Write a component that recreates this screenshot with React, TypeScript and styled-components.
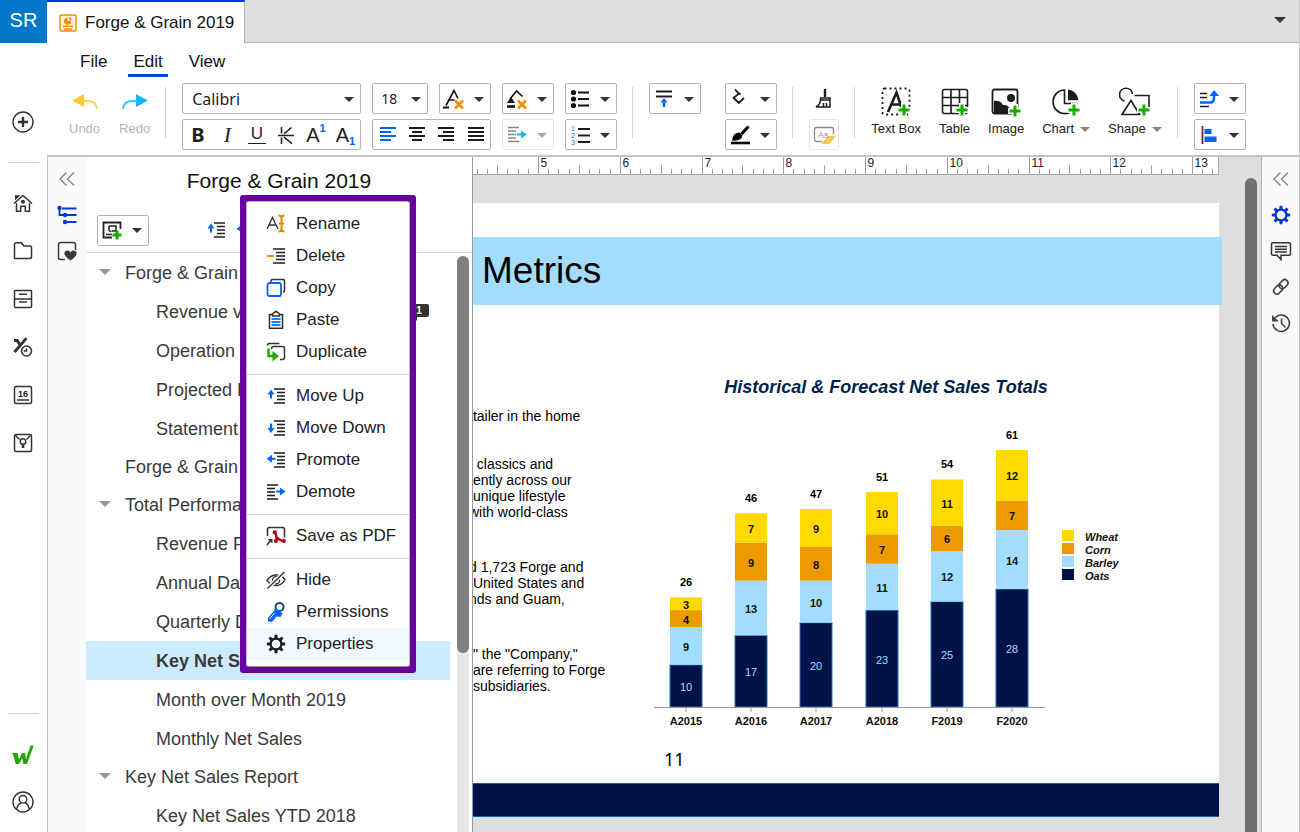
import React from 'react';
import styled, { createGlobalStyle } from 'styled-components';

const BLUE = '#0066ff';
const INK = '#1c1c1c';
const GREEN = '#1fa800';
const ORANGE = '#f29100';
const NAVY = '#001147';

const GlobalStyle = createGlobalStyle`
  *, *::before, *::after { box-sizing: border-box; }
  body {
    margin: 0;
    font-family: "Liberation Sans", Arial, sans-serif;
    color: #222;
    background: #fff;
  }
  button, select, input { font-family: inherit; color: inherit; }
  button { cursor: pointer; }
  ul { list-style: none; margin: 0; padding: 0; }
`;

/* ---------- shell ---------- */

const Shell = styled.div`
  display: flex;
  height: 100vh;
  overflow: hidden;
  border-right: 1px solid #c4c4c4;
`;

const AppNav = styled.nav`
  flex: none;
  width: 47px;
  display: flex;
  flex-direction: column;
  align-items: center;
  padding-bottom: 19px;
`;

const Brand = styled.a`
  align-self: stretch;
  height: 43px;
  flex: none;
  display: flex;
  align-items: center;
  justify-content: center;
  padding-bottom: 3px;
  background: #0077c8;
  color: #fff;
  font-size: 20px;
  line-height: 24px;
  text-decoration: none;
`;

const NavGroup = styled.div<{ $top: number }>`
  display: flex;
  flex-direction: column;
  align-items: center;
  gap: 28px;
  padding: ${(p) => p.$top}px 1px 0 0;
  margin-right: 1px;
`;

const NavFooter = styled(NavGroup)`
  gap: 26px;
`;

const NavRule = styled.hr<{ $top?: number }>`
  width: 31px;
  height: 1px;
  flex: none;
  border: 0;
  margin: ${(p) => p.$top ?? 0}px 0 0;
  background: #d0d0d0;
`;

const Spacer = styled.div`
  flex: 1;
`;

const IconButton = styled.button`
  display: flex;
  align-items: center;
  justify-content: center;
  padding: 0;
  border: 0;
  background: none;
`;

const Main = styled.div`
  flex: 1;
  min-width: 0;
  display: flex;
  flex-direction: column;
`;

/* ---------- header ---------- */

const TabBar = styled.header`
  display: flex;
  flex: none;
  height: 43px;
`;

const DocTab = styled.button`
  display: flex;
  align-items: center;
  gap: 8px;
  width: 198px;
  padding: 0 0 0 12px;
  border: 0;
  border-top: 2px solid #0037d6;
  border-right: 1px solid #b0b0b0;
  background: #fff;
  color: #111;
  font-size: 17px;
  line-height: 20px;
  white-space: nowrap;
`;

const TabRest = styled.div`
  flex: 1;
  display: flex;
  align-items: center;
  justify-content: flex-end;
  padding-right: 13px;
  background: #dedede;
  border-bottom: 1px solid #b0b0b0;
`;

const MenuBar = styled.nav`
  display: flex;
  flex: none;
  gap: 16px;
  height: 34px;
  padding: 5px 0 0 28px;
`;

const MenuLink = styled.a<{ $active?: boolean }>`
  padding: 4px 5px 0;
  font-size: 17px;
  line-height: 20px;
  color: #111;
  text-decoration: none;
  border-bottom: 3px solid ${(p) => (p.$active ? '#0044e0' : 'transparent')};
`;

const Toolbar = styled.div`
  display: flex;
  flex: none;
  height: 80px;
  padding: 6px 0 0 22px;
  border-bottom: 2px solid #c4c4c4;
`;

const Divider = styled.div`
  flex: none;
  width: 1px;
  height: 51px;
  margin: 4px 16px 0 15px;
  background: #d2d2d2;
`;

const Cluster = styled.div<{ $gap: number }>`
  display: flex;
  align-items: flex-start;
  gap: ${(p) => p.$gap}px;
`;

const Stack = styled.div`
  display: flex;
  flex-direction: column;
  gap: 5px;
`;

const Line = styled.div`
  display: flex;
  gap: 11px;
`;

const BigTool = styled.button<{ $muted?: boolean }>`
  display: grid;
  grid-template-rows: 38px 16px;
  justify-items: center;
  align-items: center;
  min-width: 31px;
  padding: 0;
  border: 0;
  background: none;
  font-size: 13px;
  line-height: 16px;
  color: ${(p) => (p.$muted ? '#b4b4b4' : '#222')};
  white-space: nowrap;
`;

const ToolLabel = styled.span`
  display: flex;
  align-items: center;
  gap: 6px;
`;

const Group = styled.div<{ $width: number; $faint?: boolean }>`
  display: flex;
  width: ${(p) => p.$width}px;
  height: 31px;
  border: 1px solid ${(p) => (p.$faint ? '#e6e6e6' : '#b4b4b4')};
  border-radius: 2px;
  background: #fff;

  & > * + * {
    border-left: 1px solid ${(p) => (p.$faint ? '#e6e6e6' : '#c0c0c0')};
  }
`;

const Cell = styled.button`
  flex: 1;
  min-width: 0;
  display: flex;
  align-items: center;
  justify-content: center;
  padding: 0;
  border: 0;
  background: none;
  font-size: 20px;
  line-height: 24px;
`;

const PlainTool = styled(IconButton)`
  width: 30px;
  height: 31px;
`;

const CaretCell = styled.button`
  flex: none;
  width: 22px;
  display: flex;
  align-items: center;
  justify-content: center;
  padding: 0;
  border: 0;
  background: none;
`;

const SizeInput = styled.input`
  flex: 1;
  min-width: 0;
  padding: 0;
  border: 0;
  outline: 0;
  background: none;
  text-align: center;
  font-family: "Noto Sans", sans-serif;
  font-size: 14px;
`;

const FontField = styled.label`
  position: relative;
  display: block;
  width: 179px;
  height: 31px;
`;

const FontSelect = styled.select`
  appearance: none;
  width: 100%;
  height: 100%;
  padding: 0 24px 0 9px;
  border: 1px solid #b4b4b4;
  border-radius: 2px;
  background: #fff;
  font-family: "Noto Sans", sans-serif;
  font-size: 16px;
`;

const FieldCaret = styled.span`
  position: absolute;
  top: 10px;
  right: 7px;
  display: flex;
  pointer-events: none;
`;

const Bold = styled.b`
  font-family: "Noto Sans", sans-serif;
`;

const Italic = styled.i`
  font-family: "Liberation Serif", serif;
  font-size: 22px;
`;

const Underlined = styled.span`
  font-size: 17px;
  line-height: 18px;
  padding: 0 3px;
  border-bottom: 1px solid #222;
`;

const Script = styled.span<{ $low?: boolean }>`
  align-self: ${(p) => (p.$low ? 'flex-end' : 'flex-start')};
  font-size: 11px;
  line-height: 16px;
  font-weight: bold;
  color: ${BLUE};
`;

/* ---------- workspace ---------- */

const Workspace = styled.div`
  flex: 1;
  min-height: 0;
  display: flex;
`;

const Strip = styled.div<{ $side: 'left' | 'right' }>`
  flex: none;
  width: ${(p) => (p.$side === 'left' ? 39 : 38)}px;
  display: flex;
  flex-direction: column;
  align-items: center;
  gap: 16px;
  padding-top: 12px;
  background: #fafafa;
  border-left: 1px solid ${(p) => (p.$side === 'left' ? '#c4c4c4' : '#b4b4b4')};
`;

const Outline = styled.aside`
  position: relative;
  flex: none;
  width: 387px;
  display: flex;
  flex-direction: column;
  border-right: 1px solid #999;
`;

const OutlineTitle = styled.h1`
  margin: 0;
  padding: 12px 0 22px;
  text-align: center;
  font-size: 21px;
  line-height: 24px;
  font-weight: normal;
  color: #111;
`;

const OutlineTools = styled.div`
  display: flex;
  flex: none;
  align-items: center;
  height: 38px;
  padding: 0 11px 7px;
  border-bottom: 1px solid #dcdcdc;
`;

const OutlineMoves = styled.div`
  display: flex;
  gap: 10px;
  padding-left: 57px;
`;

const TreeArea = styled.div`
  flex: 1;
  min-height: 0;
  display: flex;
  overflow: hidden;
`;

const Tree = styled.ul`
  flex: 1;
  min-width: 0;
  && { padding-top: 1px; }
`;

const TreeRow = styled.li<{ $branch?: boolean; $selected?: boolean }>`
  display: flex;
  align-items: center;
  height: ${(p) => (p.$branch ? 38 : 39)}px;
  padding: 0 21px 0 ${(p) => (p.$branch ? 13 : 70)}px;
  background: ${(p) => (p.$selected ? '#cdebff' : 'transparent')};
  font-size: 18px;
  line-height: 22px;
  font-weight: ${(p) => (p.$selected ? 'bold' : 'normal')};
  color: #3a3a3a;
  white-space: nowrap;
`;

const Twisty = styled.span`
  display: flex;
  width: 26px;
`;

const TreeText = styled.span`
  flex: 1;
`;

const ScrollTrack = styled.div`
  flex: none;
  width: 12px;
  margin: 3px 3px 0 7px;
  border-radius: 6px 6px 0 0;
  background: #e8e8e8;
`;

const ScrollThumb = styled.div<{ $height: string; $color: string }>`
  height: ${(p) => p.$height};
  border-radius: 6px;
  background: ${(p) => p.$color};
`;

/* ---------- context menu ---------- */

const MenuFrame = styled.div`
  position: absolute;
  z-index: 5;
  top: 38px;
  left: 154px;
  width: 176px;
  padding: 6px;
  border-radius: 3px;
  background: #6a00a0;
`;

const ContextMenu = styled.div`
  padding: 6px 0;
  border: 1px solid #bbb;
  border-bottom-color: #999;
  border-radius: 3px;
  background: #fff;
`;

const MenuItem = styled.button<{ $hover?: boolean }>`
  display: flex;
  align-items: center;
  gap: 10px;
  width: 100%;
  height: 32px;
  padding: 0 0 0 19px;
  border: 0;
  background: ${(p) => (p.$hover ? '#f1f8ff' : 'none')};
  font-size: 17px;
  line-height: 20px;
  color: #222;
  white-space: nowrap;
`;

const MenuRule = styled.hr`
  height: 1px;
  margin: 6px 0 5px;
  border: 0;
  background: #d8d8d8;
`;

/* ---------- slide ---------- */

const Canvas = styled.main`
  flex: 1;
  min-width: 0;
  display: flex;
  background: #dedede;
`;

const Page = styled.div`
  flex: 1;
  min-width: 0;
  display: flex;
  flex-direction: column;
`;

const RulerBar = styled.div`
  height: 18px;
  flex: none;
  overflow: hidden;
  background: #fff;
  border-right: 1px solid #aaa;
  border-bottom: 1px solid #a8a8a8;
`;

const Slide = styled.section`
  margin-top: 28px;
  padding-top: 34px;
  background: #fff;
`;

const SlideTitle = styled.h2`
  margin: 0 -3px 0 0;
  padding: 0 9px;
  height: 68px;
  background: #a2ddff;
  color: #000;
  font-size: 37px;
  line-height: 68px;
  font-weight: normal;
`;

const SlideBody = styled.div`
  display: flex;
  height: 436px;
`;

const Copy = styled.div`
  flex: none;
  width: 177px;
  padding-top: 103px;
  overflow: hidden;
`;

const Para = styled.p<{ $gap: number }>`
  margin: 0 0 ${(p) => p.$gap}px -4px;
  font-size: 14px;
  line-height: 16px;
  color: #000;
  white-space: pre;
`;

const ChartBox = styled.div`
  padding-top: 65px;
`;

const PageNumber = styled.div`
  height: 42px;
  padding: 6px 0 0 191px;
  font-family: "Noto Sans", sans-serif;
  font-size: 18px;
  line-height: 24px;
  color: #000;
`;

const SlideFooter = styled.footer`
  height: 34px;
  background: ${NAVY};
  border-top: 1px solid #1060a8;
  border-bottom: 1px solid #1060a8;
`;

const CanvasScroll = styled.div`
  flex: none;
  width: 42px;
  padding: 21px 4px 0 26px;
`;

/* ---------- icons ---------- */

type SvgProps = { w?: number; h?: number; sw?: number; color?: string; children: React.ReactNode };
const Svg = ({ w = 20, h = 20, sw = 1.5, color = '#333', children }: SvgProps) => (
  <svg width={w} height={h} viewBox={`0 0 ${w} ${h}`} fill="none" stroke={color} strokeWidth={sw} aria-hidden="true">
    {children}
  </svg>
);

const Caret = ({ color = '#333' }: { color?: string }) => (
  <Svg w={10} h={12}><path d="M0 4h10l-5 5z" fill={color} stroke="none" /></Svg>
);

const Plus = ({ x, y }: { x: number; y: number }) => (
  <g>
    <path d={`M${x - 7} ${y}h14M${x} ${y - 7}v14`} stroke="#fff" strokeWidth="6" />
    <path d={`M${x - 5.5} ${y}h11M${x} ${y - 5.5}v11`} stroke={GREEN} strokeWidth="3" />
  </g>
);

const Gear = ({ color }: { color: string }) => (
  <Svg color={color}>
    <circle cx="10" cy="10" r="5.400" strokeWidth="2.200" />
    {[0, 45, 90, 135, 180, 225, 270, 315].map((a) => (
      <path key={a} d="M8.2 4.6 8.7 0.8h2.6l.5 3.8z" fill={color} stroke="none" transform={`rotate(${a} 10 10)`} />
    ))}
  </Svg>
);

const Collapse = () => (
  <Svg color="#8a8a8a"><path d="M9.5 3.5 3 10l6.500 6.500M17 3.500 10.500 10l6.500 6.500" /></Svg>
);

const listLines = (x: number) => `M${x} 3h${19 - x}M${x + 3} 6.500h${16 - x}M${x + 3} 10h${16 - x}M${x + 3} 13.500h${16 - x}M${x} 17h${19 - x}`;

const icons = {
  plusCircle: (
    <Svg w={22} h={22} sw={1.4}><circle cx="11" cy="11" r="10" /><path d="M6 11h10M11 6v10" strokeWidth="2.400" /></Svg>
  ),
  home: (
    <Svg>
      <path d="M1 10.500 10 2.500l9 8" />
      <path d="M3.500 10v8.200h4.200v-5h4.600v5h4.200V10" />
      <path d="M2 2.200h5.500L2 7.500z" fill="#333" stroke="none" />
      <circle cx="10" cy="8.800" r="2" fill="#333" stroke="none" />
    </Svg>
  ),
  folder: <Svg><path d="M1.500 17.500v-14q0-1.800 1.800-1.800h5l2.500 3.300h5.900q1.800 0 1.800 1.800v9q0 1.700-1.800 1.700z" /></Svg>,
  cabinet: <Svg><rect x="1.500" y="1.500" width="17" height="17" rx="1" /><path d="M1.500 10h17M6 5.300h8M6 13h8" /></Svg>,
  formula: (
    <Svg>
      <path d="M1 3.500h3.200l5 8M1.500 15 13.500 1.200" strokeWidth="2.800" />
      <circle cx="13.500" cy="14" r="7" fill="#fff" stroke="none" />
      <circle cx="13.500" cy="14" r="5" />
      <path d="M13.500 11.500V14h-2.800" />
    </Svg>
  ),
  calendar: (
    <Svg>
      <rect x="1.500" y="1.500" width="17" height="17" rx="1.500" />
      <text x="10" y="12" fontSize="9" fontWeight="bold" textAnchor="middle" fill="#222" stroke="none">16</text>
      <path d="M4 15h12" />
    </Svg>
  ),
  idea: (
    <Svg>
      <rect x="1.500" y="1.500" width="17" height="17" rx="1.500" />
      <path d="m2.500 2.500 4 4M17.500 2.500l-4 4" />
      <circle cx="10" cy="8.500" r="2.800" />
      <path d="M9.300 11.300v3h1.400v-3" strokeWidth="1.300" />
    </Svg>
  ),
  logo: (
    <Svg w={22} color={GREEN} sw={3.4}>
      <path d="M0 8h5.500L7 14.500 10 8h3l1 6.500L18.500 0.500h3.200L15 19h-3.600l-1.200-6L7 19H3.600L1.600 11z" fill={GREEN} stroke="none" />
    </Svg>
  ),
  user: (
    <Svg w={22} h={22} sw={1.4}>
      <circle cx="11" cy="11" r="10" /><circle cx="11" cy="8.300" r="3.800" /><path d="M4.800 18q1-5.300 4.300-6M17.200 18q-1-5.300-4.300-6" />
    </Svg>
  ),
  doc: (
    <Svg w={18} h={18} color="#f28c00">
      <rect x="1" y="1" width="16" height="16" rx="1.500" fill="#fff5e4" />
      <path d="M8.500 3.500v3.200h3.700a3.600 3.600 0 1 1-3.700-3.200z" fill="#f28c00" stroke="none" />
      <path d="M10 2.800a3.400 3.400 0 0 1 2.900 2.900h-2.900z" fill="#f28c00" stroke="none" />
      <path d="M4 12.300h10M5 15h8" strokeWidth="1.400" />
    </Svg>
  ),
  undo: (
    <Svg w={26} h={16} color="#ffd24d" sw={2}>
      <path d="M0 6.500 12 0v13z" fill="#ffc83d" stroke="none" /><path d="M11 7h5q8 0 9 8" />
    </Svg>
  ),
  redo: (
    <Svg w={26} h={16} color="#3cc4ff" sw={2}>
      <path d="M26 6.500 14 0v13z" fill="#12b4ff" stroke="none" /><path d="M15 7h-5q-8 0-9 8" />
    </Svg>
  ),
  strike: (
    <Svg color="#222" sw={1.6}>
      <path d="M2 10.500h16M5.500 2v6.500M5.500 12.500V19M15.500 2.500 8 8.800M8 12.200l8 6.500" />
    </Svg>
  ),
  alignLeft: <Svg color={BLUE} sw={2}><path d="M2 3h16M2 7h11M2 11h16M2 15h11" /></Svg>,
  alignCenter: <Svg color={INK} sw={2}><path d="M2 3h16M5 7h10M2 11h16M5 15h10" /></Svg>,
  alignRight: <Svg color={INK} sw={2}><path d="M2 3h16M7 7h11M2 11h16M7 15h11" /></Svg>,
  justify: <Svg color={INK} sw={2}><path d="M2 3h16M2 7h16M2 11h16M2 15h16" /></Svg>,
  clearColor: (
    <Svg w={24} h={22} color="#111">
      <path d="M4 17.500 12 2.500l4 8" strokeWidth="1.600" /><path d="M6.500 12h6" />
      <path d="M1 19.500h6" strokeWidth="2" />
      <path d="m13 12.500 8 8M21 12.500l-8 8" stroke={ORANGE} strokeWidth="2.800" />
    </Svg>
  ),
  clearFill: (
    <Svg w={24} h={22} color="#111">
      <path d="m5 11 6.500-8 6 5.500" strokeWidth="1.600" /><path d="m6 9 4 6H2z" fill="#111" stroke="none" />
      <path d="M2 18.500h8" strokeWidth="2.600" />
      <path d="m13 12.500 8 8M21 12.500l-8 8" stroke={ORANGE} strokeWidth="2.800" />
    </Svg>
  ),
  bullets: (
    <Svg color="#111" sw={2}>
      <path d="M8 3.500h11M8 10h11M8 16.500h11" />
      {[3.5, 10, 16.5].map((y) => <circle key={y} cx="3.500" cy={y} r="2.600" fill="#111" stroke="none" />)}
    </Svg>
  ),
  numbers: (
    <Svg color={INK} sw={1.8}>
      <path d="M8 4h12M8 10.500h12M8 17h12" />
      <g fill="#2277aa" stroke="none" fontSize="7"><text x="1" y="6">1</text><text x="1" y="13">2</text><text x="1" y="20">3</text></g>
    </Svg>
  ),
  indent: (
    <Svg color="#888" sw={1.3}>
      <path d="M1 2.500h11M1 6h8M1 9.500h8M1 13h8M1 16.500h11" /><path d="M10 9.500h5" stroke="#19b5ff" strokeWidth="2" /><path d="m14 5.500 6 4-6 4z" fill="#19b5ff" stroke="none" />
    </Svg>
  ),
  alignTop: (
    <Svg color={INK} sw={1.8}><path d="M2 2.500h16M2 7.500h16" /><path d="M10 18v-6" stroke={BLUE} strokeWidth="2.400" /><path d="m6.500 13.500 3.500-4.500 3.500 4.500z" fill={BLUE} stroke="none" /></Svg>
  ),
  bucket: <Svg color={INK} sw={1.8}><path d="M5 0.500 9 4.500 3.500 9l6 5.500M9.500 4.500l1 1M8.500 14 14 9" /></Svg>,
  highlight: (
    <Svg color="#000"><path d="M1 18h19" strokeWidth="2.600" /><path d="m11.500 9 7-7.500" strokeWidth="3.200" /><path d="M2 15.500q1-8 7.500-8l3 3q-1 6-10.500 5z" fill="#000" stroke="none" /></Svg>
  ),
  brush: (
    <Svg color={INK}><path d="M11 0v8" strokeWidth="2.400" /><path d="M6.500 11V9h9.500v9H2q4-2 4.500-7h9M9.500 14v4M12.500 14v4" /></Svg>
  ),
  clearStyle: (
    <Svg w={22} h={20} color="#8c8c8c" sw={1.3}>
      <path d="M9 16.500H3.500q-2 0-2-2v-10q0-2 2-2h15q2 0 2 2V9" />
      <text x="5" y="12.500" fontSize="9" fill="#8c8c8c" stroke="none">As</text>
      <path d="m10 18 6-6h5l-5 6z" fill="#ffd24d" stroke="#f8b932" />
    </Svg>
  ),
  textBox: (
    <Svg w={30} h={30} color={INK}>
      <rect x="1.500" y="1.500" width="27" height="26" rx="2" strokeWidth="1.800" strokeDasharray="2 3" />
      <path d="M7 25 15.500 5.500 21 22M10.500 17.500h8" strokeWidth="2.600" /><Plus x={23} y={23} />
    </Svg>
  ),
  table: (
    <Svg w={28} h={30} color={INK} sw={1.6}>
      <rect x="1.500" y="2.500" width="25" height="24" rx="2" /><path d="M1.500 10.500h25M1.500 18.500h25M10 2.500v24M18.500 2.500v24" /><Plus x={21} y={23} />
    </Svg>
  ),
  image: (
    <Svg w={30} h={30} color={INK} sw={1.8}>
      <rect x="1.500" y="2.500" width="25" height="24" rx="2" />
      <circle cx="20" cy="11" r="4" fill={INK} stroke="none" />
      <path d="M3 26V14q6-1 9 4 7-1 8 8z" fill={INK} stroke="none" /><Plus x={24} y={24} />
    </Svg>
  ),
  chart: (
    <Svg w={30} h={30} color={INK} sw={1.6}>
      <path d="M13.500 3a11.800 11.800 0 1 0 12 13.500H13.500z" /><path d="M17 2.500a11.500 11.500 0 0 1 10.500 10.800H17z" fill={INK} stroke="none" /><Plus x={23} y={23} />
    </Svg>
  ),
  shape: (
    <Svg w={32} h={30} color={INK} sw={1.6}>
      <path d="M5.500 14a6.500 6.500 0 1 1 8-7M15.500 8.500h14.500v12.500h-8" /><path d="M12 13.500 20.500 27.500H3z" /><Plus x={25} y={23} />
    </Svg>
  ),
  order: (
    <Svg color={INK} sw={1.6}><path d="M1 4.500h7M1 8.500h7M1 17.500h9" /><path d="M1 13.500h10q4 0 4-5V6" stroke={BLUE} strokeWidth="2.600" /><path d="m10.500 7 4.500-6 5 6z" fill={BLUE} stroke="none" /></Svg>
  ),
  arrange: (
    <Svg color="#7a2030" sw={1.8}><path d="M3.500 1v18" /><rect x="5.500" y="4" width="7" height="5" fill={BLUE} stroke="none" /><rect x="5.500" y="11.500" width="12" height="5.500" fill={BLUE} stroke="none" /></Svg>
  ),
  outline: (
    <Svg color="#0037d6" sw={1.8}>
      <path d="M5 3.500h14.500M2.500 3.500V10H19.500M10 17h9.500" />
      {[[2.5, 3], [8, 10], [8, 17]].map(([x, y]) => <circle key={y} cx={x} cy={y} r="2.200" fill="#0037d6" stroke="none" />)}
    </Svg>
  ),
  favorite: (
    <Svg color="#3a3a3a">
      <path d="M8 18.500H3.500q-2 0-2-2v-13q0-2 2-2h13q2 0 2 2V9" />
      <path d="M13.500 19.500C8 15.500 7 13.500 7.500 11.500c.8-2.300 4.500-3 6 0 1.500-3 5.200-2.300 6 0 .5 2-.5 4-6 8z" fill="#3a3a3a" stroke="none" />
    </Svg>
  ),
  addSection: (
    <Svg color="#222">
      <path d="M10 17.500H1.500v-15h17V9" strokeWidth="1.800" /><path d="M7 6h7v5H9.500M7 6v3.500q0 2 2 2M4 14.500h6" />
      <path d="M10.500 15h9M15 10.500v9" stroke={GREEN} strokeWidth="3" />
    </Svg>
  ),
  comment: <Svg w={22}><path d="M3 1.800h16q1.500 0 1.500 1.500v9.400q0 1.500-1.500 1.500h-8v4.300l-4-4.300H3q-1.500 0-1.500-1.500V3.300q0-1.500 1.500-1.500z" /><path d="M5 5.500h12M5 8.200h12M5 11h12" /></Svg>,
  link: (
    <Svg color="#444" sw={1.6}>
      <g transform="rotate(-45 10 10)"><rect x="1.200" y="6.500" width="10" height="6.500" rx="3.200" /><rect x="8.800" y="6.500" width="10" height="6.500" rx="3.200" /></g>
    </Svg>
  ),
  history: (
    <Svg color="#444" sw={1.6}><path d="M4 4.800A8.200 8.200 0 1 1 2 11" /><path d="M10.500 5.500v5l4 4" /><path d="M1 2v6.500h7z" fill="#444" stroke="none" /></Svg>
  ),
  badge: (
    <Svg w={18} h={18}>
      <path d="M2 1h14q2 0 2 2v9q0 2-2 2H6v4l-3-4H2z" fill="#333" stroke="none" />
      <text x="8" y="11" fontSize="10" fontWeight="bold" textAnchor="middle" fill="#fff" stroke="none">1</text>
    </Svg>
  ),
  rename: (
    <Svg sw={1.4}><path d="M1 15 6.500 3.500 12 15M3 11h7" /><path d="M12.500 1.500q3 0 3 2.500v11q0 2.500-3 2.500M18.500 1.500q-3 0-3 2.500v11q0 2.500 3 2.500M13 9.500h5" stroke="#e08a00" strokeWidth="2" /></Svg>
  ),
  remove: <Svg color={INK} sw={1.6}><path d={listLines(7)} /><path d="M1 10h7" stroke={ORANGE} strokeWidth="2" /></Svg>,
  copy: (
    <Svg sw={1.5}><path d="M5 4V3q0-1.500 1.500-1.500h10.500q1.500 0 1.500 1.500v9.500q0 1.500-1.500 1.500" /><rect x="1.500" y="5" width="13.500" height="13" rx="2" fill="#fff" stroke={BLUE} strokeWidth="1.800" /></Svg>
  ),
  paste: (
    <Svg sw={1.6}><path d="M7 4.500H3.500v13.700h13V4.500H13M6.500 6V3.800L10 1.300l3.500 2.500V6z" /><path d="M5.500 9h9M5.500 12h9M5.500 15h9" stroke="#0a84ff" strokeWidth="1.800" /></Svg>
  ),
  duplicate: (
    <Svg sw={1.5}>
      <path d="M1.500 3.500q0-2 2-2h10M5.500 7V6.500q0-2 2-2h9q2 0 2 2v9q0 2-2 2H14" />
      <path d="M2.500 6.500v7.500h5" stroke={GREEN} strokeWidth="2.400" /><path d="m6.500 9 6.500 5-6.500 5.500z" fill={GREEN} stroke="none" />
    </Svg>
  ),
  moveUp: <Svg color={INK} sw={1.6}><path d={listLines(8)} /><path d="M5 12.500V6.500" stroke={BLUE} strokeWidth="2" /><path d="m1.500 8.500 3.500-5 3.500 5z" fill={BLUE} stroke="none" /></Svg>,
  moveDown: <Svg color={INK} sw={1.6}><path d={listLines(8)} /><path d="M5 5.500v6" stroke={BLUE} strokeWidth="2" /><path d="m1.500 10 3.500 5 3.500-5z" fill={BLUE} stroke="none" /></Svg>,
  promote: <Svg color={INK} sw={1.6}><path d={listLines(8)} /><path d="M9.500 8.800H4" stroke={BLUE} strokeWidth="2" /><path d="m6 4.800-5.500 4 5.500 4z" fill={BLUE} stroke="none" /></Svg>,
  demote: <Svg color={INK} sw={1.6}><path d="M1 3h11M1 6.500h8M1 10h8M1 13.500h8M1 17h11" /><path d="M10 9.500h5" stroke={BLUE} strokeWidth="2" /><path d="m14 5.500 5.500 4-5.500 4z" fill={BLUE} stroke="none" /></Svg>,
  pdf: (
    <Svg sw={1.6}>
      <path d="M1.500 10V3.500q0-2 2-2h13q2 0 2 2v8" /><path d="M1 19l3.500-4.500" /><path d="M1.500 13h5v4.500z" fill="#333" stroke="none" />
      <path d="M9 6.500q2.500 4.500 1 8.500M10.500 11q3.500 4 8 4" stroke="#b00010" strokeWidth="2.400" />
      {[[8.8, 6.3], [9.8, 15], [17.8, 15]].map(([x, y]) => <circle key={`${x}`} cx={x} cy={y} r="2.100" fill="#b00010" stroke="none" />)}
    </Svg>
  ),
  hide: (
    <Svg sw={1.4}><path d="M1 10.500Q5 4.500 11 5q5 .3 8 4.500-3.500 6.500-9.500 6-4.500-.3-8.500-5z" /><circle cx="10" cy="10.200" r="3.600" /><path d="M1.500 18.500 18.500 2" stroke="#fff" strokeWidth="4" /><path d="M1.500 18.500 18.500 2" /></Svg>
  ),
  key: (
    <Svg>
      <circle cx="13.500" cy="5" r="4" stroke="#14506e" strokeWidth="2" />
      <path d="m9 5.500 7.500 6-2 3.500-4-.500L6 20l-3.800-.5-.5-3.500L8 9z" fill={BLUE} stroke="none" />
      <path d="m8.500 11-5 6" stroke="#fff" strokeWidth="1" />
    </Svg>
  ),
  gear: <Gear color="#1c1c1c" />,
  gearBlue: <Gear color="#0037c8" />,
};

type IconName = keyof typeof icons;

/* ---------- data ---------- */

const navItems: [IconName, string][] = [
  ['home', 'Home'], ['folder', 'Files'], ['cabinet', 'Data'], ['formula', 'Formulas'], ['calendar', 'Calendar'], ['idea', 'Ideas'],
];

type Node = { text: string; branch?: boolean; open?: boolean; selected?: boolean; badge?: boolean };
const nodes: Node[] = [
  { text: 'Forge & Grain 2019', branch: true, open: true },
  { text: 'Revenue vs', badge: true },
  { text: 'Operation' },
  { text: 'Projected F' },
  { text: 'Statement' },
  { text: 'Forge & Grain', branch: true },
  { text: 'Total Performance', branch: true, open: true },
  { text: 'Revenue F' },
  { text: 'Annual Data' },
  { text: 'Quarterly D' },
  { text: 'Key Net Sales', selected: true },
  { text: 'Month over Month 2019' },
  { text: 'Monthly Net Sales' },
  { text: 'Key Net Sales Report', branch: true, open: true },
  { text: 'Key Net Sales YTD 2018' },
];

const menuGroups: [IconName, string][][] = [
  [['rename', 'Rename'], ['remove', 'Delete'], ['copy', 'Copy'], ['paste', 'Paste'], ['duplicate', 'Duplicate']],
  [['moveUp', 'Move Up'], ['moveDown', 'Move Down'], ['promote', 'Promote'], ['demote', 'Demote']],
  [['pdf', 'Save as PDF']],
  [['hide', 'Hide'], ['key', 'Permissions'], ['gear', 'Properties']],
];

const paragraphs: { gap: number; lines: string[] }[] = [
  { gap: 32, lines: [' tailer in the home'] },
  { gap: 39, lines: ['  classics and', ' ently across our', ' unique lifestyle', 'with world-class'] },
  { gap: 39, lines: ['d 1,723 Forge and', ' United States and', 'nds and Guam,'] },
  { gap: 0, lines: [' " the "Company,"', ' are referring to Forge', ' subsidiaries.'] },
];

const years: [string, number[]][] = [
  ['A2015', [10, 9, 4, 3]],
  ['A2016', [17, 13, 9, 7]],
  ['A2017', [20, 10, 8, 9]],
  ['A2018', [23, 11, 7, 10]],
  ['F2019', [25, 12, 6, 11]],
  ['F2020', [28, 14, 7, 12]],
];
const seriesColors = [NAVY, '#a2ddff', '#eb9a00', '#ffd900'];

/* ---------- parts ---------- */

const Split = ({ icon, label, faint }: { icon: IconName; label: string; faint?: boolean }) => (
  <Group $width={52} $faint={faint}>
    <Cell aria-label={label}>{icons[icon]}</Cell>
    <CaretCell aria-label={`${label} options`}><Caret color={faint ? '#aaa' : '#333'} /></CaretCell>
  </Group>
);

const Ruler = () => {
  const unit = 81.75;
  const ticks = [];
  for (let i = -6; i < 72; i++) {
    const x = Math.round(65 + (i * unit) / 8) + 0.5;
    const major = i % 8 === 0;
    const half = i % 4 === 0;
    ticks.push(<path key={i} d={`M${x} ${major ? 0 : half ? 8 : 12}V18`} stroke="#a0a0a0" />);
    if (major) ticks.push(<text key={`n${i}`} x={x + 2} y={10} fontSize="12" fill="#222">{5 + i / 8}</text>);
  }
  return <RulerBar><svg width="100%" height="18" aria-hidden="true">{ticks}</svg></RulerBar>;
};

const SalesChart = () => {
  const base = 337;
  const scale = 257 / 61;
  return (
    <svg width="480" height="365" role="img" aria-label="Historical & Forecast Net Sales Totals" fontSize="11" fontWeight="bold">
      <text x="236" y="23" fontSize="18" fontStyle="italic" textAnchor="middle" fill="#001f4d">Historical &amp; Forecast Net Sales Totals</text>
      {years.map(([year, values], i) => {
        const x = Math.round(20 + i * 65.2);
        const mid = x + 16;
        let sum = 0;
        return (
          <g key={year} textAnchor="middle">
            {values.map((v, s) => {
              const bottom = base - sum * scale;
              sum += v;
              const top = base - sum * scale;
              return (
                <g key={s}>
                  <rect x={x} y={top} width="32" height={bottom - top} fill={seriesColors[s]} stroke={s === 0 ? '#1878b4' : 'none'} />
                  <text x={mid} y={(top + bottom) / 2 + 5} fill={s === 0 ? '#a2ddff' : '#111'} fontWeight={s === 0 ? 'normal' : 'bold'}>{v}</text>
                </g>
              );
            })}
            <text x={mid} y={base - sum * scale - 11} fill="#000">{sum}</text>
            <path d={`M${mid} ${base}v5`} stroke="#999" />
            <text x={mid} y={355} fill="#111">{year}</text>
          </g>
        );
      })}
      <path d="M4 337.500h391" stroke="#999" />
      {['Wheat', 'Corn', 'Barley', 'Oats'].map((name, i) => (
        <g key={name} fontStyle="italic">
          <rect x="412" y={160 + i * 13} width="12" height="11" fill={seriesColors[3 - i]} />
          <text x="435" y={171 + i * 13} fill="#111">{name}</text>
        </g>
      ))}
    </svg>
  );
};

export default function App() {
  return (
    <Shell>
      <GlobalStyle />
      <AppNav>
        <Brand href="#">SR</Brand>
        <NavGroup $top={68}><IconButton aria-label="Create">{icons.plusCircle}</IconButton></NavGroup>
        <NavRule $top={29} />
        <NavGroup $top={30}>
          {navItems.map(([icon, label]) => <IconButton key={icon} aria-label={label}>{icons[icon]}</IconButton>)}
        </NavGroup>
        <Spacer />
        <NavRule />
        <NavFooter $top={31}>
          <IconButton aria-label="Workspace">{icons.logo}</IconButton>
          <IconButton aria-label="Account">{icons.user}</IconButton>
        </NavFooter>
      </AppNav>

      <Main>
        <TabBar>
          <DocTab>{icons.doc}Forge &amp; Grain 2019</DocTab>
          <TabRest>
            <IconButton aria-label="Open tabs"><Svg w={12} h={12}><path d="M0 2h12L6 8z" fill="#333" stroke="none" /></Svg></IconButton>
          </TabRest>
        </TabBar>
        <MenuBar>
          <MenuLink href="#">File</MenuLink>
          <MenuLink href="#" $active>Edit</MenuLink>
          <MenuLink href="#">View</MenuLink>
        </MenuBar>
        <Toolbar>
          <Cluster $gap={19}>
            <BigTool $muted>{icons.undo}Undo</BigTool>
            <BigTool $muted>{icons.redo}Redo</BigTool>
          </Cluster>
          <Divider />
          <Cluster $gap={11}>
            <Stack>
              <FontField>
                <FontSelect aria-label="Font" defaultValue="Calibri"><option>Calibri</option></FontSelect>
                <FieldCaret><Caret /></FieldCaret>
              </FontField>
              <Group $width={179}>
                <Cell aria-label="Bold"><Bold>B</Bold></Cell>
                <Cell aria-label="Italic"><Italic>I</Italic></Cell>
                <Cell aria-label="Underline"><Underlined>U</Underlined></Cell>
                <Cell aria-label="Strikethrough">{icons.strike}</Cell>
                <Cell aria-label="Superscript">A<Script>1</Script></Cell>
                <Cell aria-label="Subscript">A<Script $low>1</Script></Cell>
              </Group>
            </Stack>
            <Stack>
              <Line>
                <Group $width={56}>
                  <SizeInput aria-label="Font size" defaultValue="18" />
                  <CaretCell aria-label="Font sizes"><Caret /></CaretCell>
                </Group>
                <Split icon="clearColor" label="Text color" />
              </Line>
              <Group $width={119}>
                <Cell aria-label="Align left">{icons.alignLeft}</Cell>
                <Cell aria-label="Align center">{icons.alignCenter}</Cell>
                <Cell aria-label="Align right">{icons.alignRight}</Cell>
                <Cell aria-label="Justify">{icons.justify}</Cell>
              </Group>
            </Stack>
            <Stack>
              <Split icon="clearFill" label="Highlight" />
              <Split icon="indent" label="Indent" faint />
            </Stack>
            <Stack>
              <Split icon="bullets" label="Bulleted list" />
              <Split icon="numbers" label="Numbered list" />
            </Stack>
          </Cluster>
          <Divider />
          <Cluster $gap={24}>
            <Split icon="alignTop" label="Vertical alignment" />
            <Stack>
              <Split icon="bucket" label="Fill" />
              <Split icon="highlight" label="Line color" />
            </Stack>
          </Cluster>
          <Divider />
          <Stack>
            <PlainTool aria-label="Format painter">{icons.brush}</PlainTool>
            <Group $width={30} $faint>
              <Cell aria-label="Clear formatting">{icons.clearStyle}</Cell>
            </Group>
          </Stack>
          <Divider />
          <Cluster $gap={18}>
            <BigTool>{icons.textBox}Text Box</BigTool>
            <BigTool>{icons.table}Table</BigTool>
            <BigTool>{icons.image}Image</BigTool>
            <BigTool>{icons.chart}<ToolLabel>Chart<Caret color="#888" /></ToolLabel></BigTool>
            <BigTool>{icons.shape}<ToolLabel>Shape<Caret color="#888" /></ToolLabel></BigTool>
          </Cluster>
          <Divider />
          <Stack>
            <Split icon="order" label="Order" />
            <Split icon="arrange" label="Arrange" />
          </Stack>
        </Toolbar>

        <Workspace>
          <Strip $side="left">
            <IconButton aria-label="Collapse panel"><Collapse /></IconButton>
            <IconButton aria-label="Outline">{icons.outline}</IconButton>
            <IconButton aria-label="Favorites">{icons.favorite}</IconButton>
          </Strip>
          <Outline>
            <OutlineTitle>Forge &amp; Grain 2019</OutlineTitle>
            <OutlineTools>
              <Split icon="addSection" label="Add section" />
              <OutlineMoves>
                <IconButton aria-label="Move section up">{icons.moveUp}</IconButton>
                <IconButton aria-label="Promote section">{icons.promote}</IconButton>
              </OutlineMoves>
            </OutlineTools>
            <TreeArea>
              <Tree>
                {nodes.map((n) => (
                  <TreeRow key={n.text} $branch={n.branch} $selected={n.selected}>
                    {n.branch && <Twisty>{n.open && <Svg w={12} h={12}><path d="M0 2h12L6 8z" fill="#999" stroke="none" /></Svg>}</Twisty>}
                    <TreeText>{n.text}</TreeText>
                    {n.badge && icons.badge}
                  </TreeRow>
                ))}
              </Tree>
              <ScrollTrack><ScrollThumb $height="69%" $color="#808080" /></ScrollTrack>
            </TreeArea>
            <MenuFrame>
              <ContextMenu role="menu">
                {menuGroups.map((group, g) => (
                  <React.Fragment key={g}>
                    {g > 0 && <MenuRule />}
                    {group.map(([icon, label]) => (
                      <MenuItem key={icon} role="menuitem" $hover={label === 'Properties'}>{icons[icon]}{label}</MenuItem>
                    ))}
                  </React.Fragment>
                ))}
              </ContextMenu>
            </MenuFrame>
          </Outline>
          <Canvas>
            <Page>
              <Ruler />
              <Slide>
                <SlideTitle>Metrics</SlideTitle>
                <SlideBody>
                  <Copy>
                    {paragraphs.map((p) => <Para key={p.lines[0]} $gap={p.gap}>{p.lines.join('\n')}</Para>)}
                  </Copy>
                  <ChartBox><SalesChart /></ChartBox>
                </SlideBody>
                <PageNumber>11</PageNumber>
                <SlideFooter />
              </Slide>
            </Page>
            <CanvasScroll><ScrollThumb $height="calc(100% + 10px)" $color="#707070" /></CanvasScroll>
          </Canvas>
          <Strip $side="right">
            <IconButton aria-label="Expand panel"><Collapse /></IconButton>
            <IconButton aria-label="Settings">{icons.gearBlue}</IconButton>
            <IconButton aria-label="Comments">{icons.comment}</IconButton>
            <IconButton aria-label="Links">{icons.link}</IconButton>
            <IconButton aria-label="History">{icons.history}</IconButton>
          </Strip>
        </Workspace>
      </Main>
    </Shell>
  );
}
